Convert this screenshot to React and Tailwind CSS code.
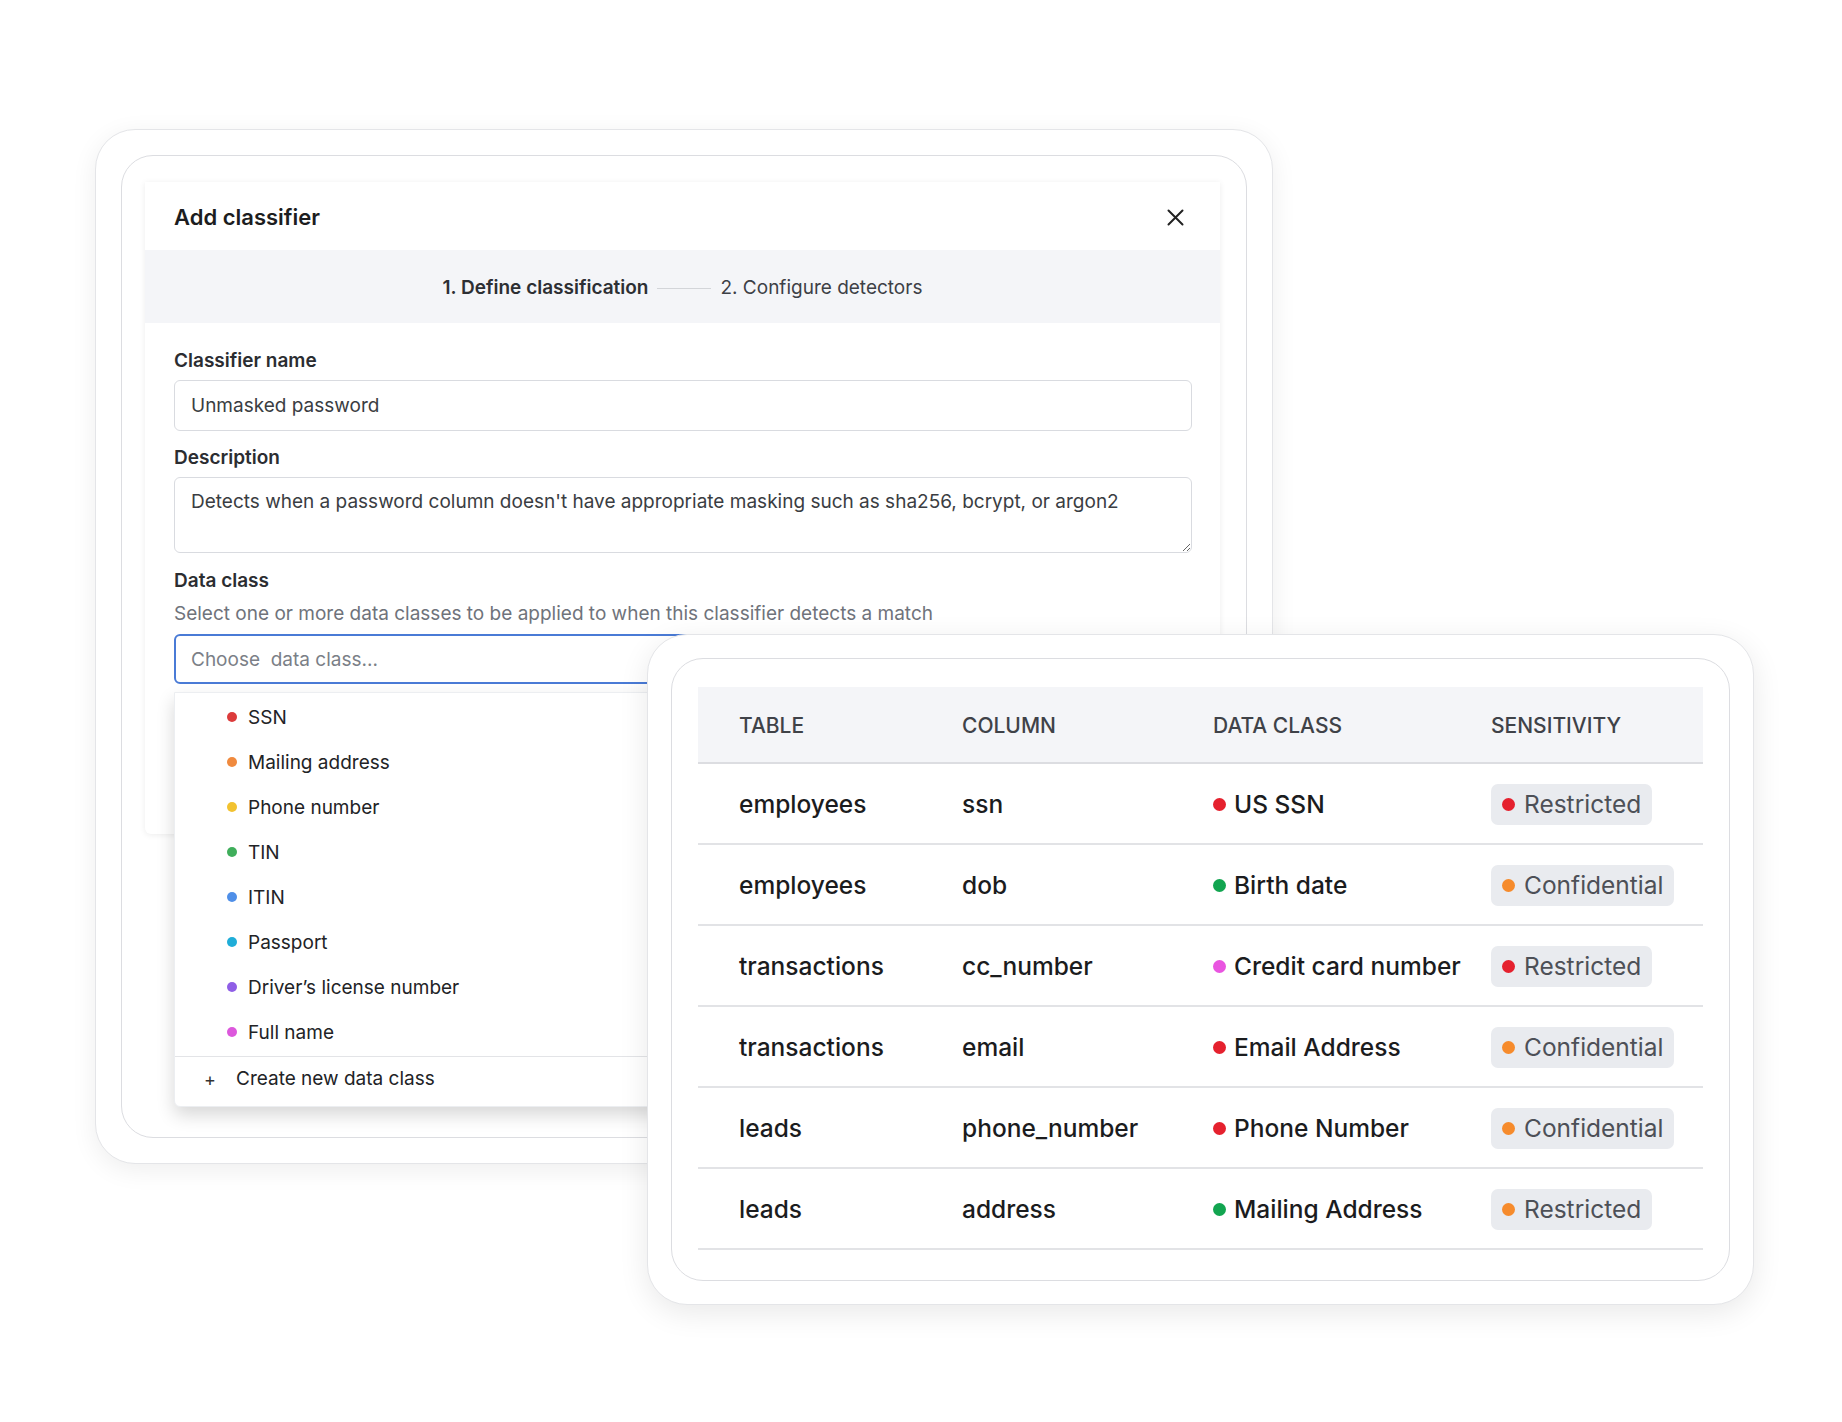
import React from "react";

const dataClasses = [
  { name: "SSN", color: "bg-[#dc3b3b]" },
  { name: "Mailing address", color: "bg-[#f08a3e]" },
  { name: "Phone number", color: "bg-[#f2c230]" },
  { name: "TIN", color: "bg-[#3fae5b]" },
  { name: "ITIN", color: "bg-[#4f8fe8]" },
  { name: "Passport", color: "bg-[#1fadd8]" },
  { name: "Driver’s license number", color: "bg-[#8f5ee6]" },
  { name: "Full name", color: "bg-[#dc58dc]" },
];

const rows = [
  { table: "employees", column: "ssn", dataClass: "US SSN", classDot: "bg-[#e5212e]", level: "Restricted", levelDot: "bg-[#e5212e]" },
  { table: "employees", column: "dob", dataClass: "Birth date", classDot: "bg-[#12a550]", level: "Confidential", levelDot: "bg-[#f68b2c]" },
  { table: "transactions", column: "cc_number", dataClass: "Credit card number", classDot: "bg-[#e955e0]", level: "Restricted", levelDot: "bg-[#e5212e]" },
  { table: "transactions", column: "email", dataClass: "Email Address", classDot: "bg-[#e5212e]", level: "Confidential", levelDot: "bg-[#f68b2c]" },
  { table: "leads", column: "phone_number", dataClass: "Phone Number", classDot: "bg-[#e5212e]", level: "Confidential", levelDot: "bg-[#f68b2c]" },
  { table: "leads", column: "address", dataClass: "Mailing Address", classDot: "bg-[#12a550]", level: "Restricted", levelDot: "bg-[#f68b2c]" },
];

const Label = ({ children, className = "" }) => (
  <div className={`text-[19px] leading-[24px] font-semibold text-[#2b2d31] ${className}`}>
    {children}
  </div>
);

const DataClassDropdown = () => (
  <div className="absolute left-0 right-0 top-[58px] rounded-b-md border border-[#eceef1] bg-white shadow-[0_8px_18px_rgba(0,0,0,0.16)]">
    <div className="pt-[3px]">
      {dataClasses.map((item) => (
        <div key={item.name} className="flex h-[45px] items-center pl-[52px]">
          <span className={`mb-[4px] h-[10px] w-[10px] rounded-full ${item.color}`}></span>
          <span className="ml-[11px] text-[19px] text-[#222326]">{item.name}</span>
        </div>
      ))}
    </div>
    <div className="flex h-[50px] items-center border-t border-[#e3e4e7] pb-[5px] pl-[29px]">
      <span className="w-[32px] text-[18px] text-[#333]">+</span>
      <span className="text-[19px] text-[#222326]">Create new data class</span>
    </div>
  </div>
);

const ClassifierModal = () => (
  <div className="h-[652px] w-[1075px] rounded-b-md bg-white shadow-[0_1px_6px_rgba(0,0,0,0.08)]">
    <div className="flex h-[68px] items-center justify-between pl-[29px] pr-[36px] pt-[2px]">
      <h2 className="text-[22px] font-semibold text-[#1c1d20]">Add classifier</h2>
      <svg width="17" height="17" viewBox="0 0 17 17" className="text-[#222]">
        <path d="M1.5 1.5 15.5 15.5M15.5 1.5 1.5 15.5" stroke="currentColor" strokeWidth="2" strokeLinecap="round" />
      </svg>
    </div>

    <div className="flex h-[73px] items-center justify-center gap-[9px] bg-[#f4f5f8] pt-[3px] text-[19px]">
      <span className="font-semibold text-[#2d2f33]">1. Define classification</span>
      <span className="h-px w-[54px] bg-[#d3d5d9]"></span>
      <span className="text-[#3d4046]">2. Configure detectors</span>
    </div>

    <div className="px-[28px] pl-[29px] pt-[26px]">
      <Label className="mb-[7px]">Classifier name</Label>
      <div className="flex h-[51px] items-center rounded-md border border-[#d9dbe0] px-[16px] pt-[2px] text-[19px] text-[#3a3d42]">
        Unmasked password
      </div>

      <Label className="mb-[7px] mt-[15px]">Description</Label>
      <textarea
        readOnly
        value="Detects when a password column doesn't have appropriate masking such as sha256, bcrypt, or argon2"
        className="block h-[76px] w-full rounded-md border border-[#d9dbe0] px-[16px] pt-[12px] text-[19px] leading-[24px] text-[#3a3d42] outline-none"
      />

      <Label className="mt-[16px]">Data class</Label>
      <div className="mt-[9px] text-[19px] leading-[24px] text-[#6f737b]">
        Select one or more data classes to be applied to when this classifier detects a match
      </div>

      <div className="relative mt-[8px]">
        <div className="flex h-[50px] items-center whitespace-pre rounded-md border-2 border-[#4a7bd6] px-[15px] pt-[2px] text-[19px] text-[#7b7f87]">
          Choose  data class...
        </div>
        <DataClassDropdown />
      </div>
    </div>
  </div>
);

const SensitivityTable = () => (
  <div className="w-[1005px]">
    <div className="grid h-[77px] grid-cols-[223px_251px_278px_253px] items-center border-b-2 border-[#dcdde1] bg-[#f4f5f8] pt-[2px] text-[21px] font-medium uppercase text-[#3f4248]">
      <div className="pl-[41px]">Table</div>
      <div className="pl-[41px]">Column</div>
      <div className="pl-[41px]">Data class</div>
      <div className="pl-[41px]">Sensitivity</div>
    </div>
    {rows.map((row, i) => (
      <div
        key={i}
        className="grid h-[81px] grid-cols-[223px_251px_278px_253px] items-center border-b-2 border-[#e2e3e6] pt-[2px] text-[24.5px] font-medium text-[#1b1c1e]"
      >
        <div className="pl-[41px]">{row.table}</div>
        <div className="pl-[41px]">{row.column}</div>
        <div className="flex items-center gap-[8px] pl-[41px] whitespace-nowrap">
          <span className={`h-[13px] w-[13px] shrink-0 rounded-full ${row.classDot}`}></span>
          {row.dataClass}
        </div>
        <div className="pl-[41px]">
          <span className="inline-flex h-[41px] items-center gap-[9px] rounded-[7px] bg-[#e9ebef] pl-[11px] pr-[11px] font-normal text-[#4d5057]">
            <span className={`h-[13px] w-[13px] rounded-full ${row.levelDot}`}></span>
            {row.level}
          </span>
        </div>
      </div>
    ))}
  </div>
);

export default function App() {
  return (
    <div className="relative h-[1422px] w-[1842px] overflow-hidden bg-white font-['Inter',sans-serif]">
      {/* back card: add classifier modal */}
      <div className="absolute left-[95px] top-[129px] h-[1035px] w-[1178px] rounded-[40px] border border-[#e4e5e8] bg-white p-[25px] shadow-[0_6px_26px_rgba(0,0,0,0.07)]">
        <div className="h-full rounded-[32px] border border-[#dcdde1] pl-[23px] pt-[26px]">
          <ClassifierModal />
        </div>
      </div>

      {/* front card: sensitivity table */}
      <div className="absolute left-[647px] top-[634px] h-[671px] w-[1107px] rounded-[40px] border border-[#e4e5e8] bg-white p-[23px] shadow-[0_8px_30px_rgba(0,0,0,0.09)]">
        <div className="h-full rounded-[32px] border border-[#dcdde1] pl-[26px] pt-[28px]">
          <SensitivityTable />
        </div>
      </div>
    </div>
  );
}
